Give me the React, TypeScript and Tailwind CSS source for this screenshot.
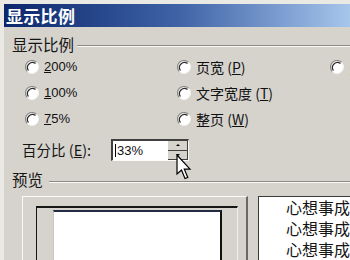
import React from 'react';

const CJK = "font-['Noto_Sans_CJK_SC','Noto_Sans',sans-serif]";
const LAT = "font-['Liberation_Sans','Noto_Sans_CJK_SC',sans-serif]";

function Radio() {
  return (
    <svg width="14" height="14" viewBox="0 0 14 14" className="shrink-0">
      <circle cx="7" cy="7" r="6.5" fill="#ffffff" />
      <path d="M11.6 2.4 A6.5 6.5 0 0 0 2.4 11.6" fill="none" stroke="#8a8884" strokeWidth="1.2" />
      <path d="M10.5 3.5 A5 5 0 0 0 3.5 10.5" fill="none" stroke="#2a2a2a" strokeWidth="1.2" />
      <path d="M2.4 11.6 A6.5 6.5 0 0 0 11.6 2.4" fill="none" stroke="#f4f3f0" strokeWidth="1" />
    </svg>
  );
}

function Opt({ children }: { children: React.ReactNode }) {
  return (
    <div className="h-[26px] flex items-center gap-[5px] text-[#111] whitespace-nowrap">
      <Radio />
      {children}
    </div>
  );
}

function Etched() {
  return <div className="flex-1 h-[2px] border-t border-[#8c8a85] border-b border-b-[#fbfaf7]" />;
}

export default function App() {
  return (
    <div className="relative w-[350px] h-[260px] overflow-hidden bg-[#ebe9e4] pt-[4px] pl-[4px]">
      {/* title bar */}
      <div className="h-[23px] flex items-center pl-[2px] bg-gradient-to-r from-[#0c266c] via-[#3f62a6] to-[#a7c6ec]">
        <span className={`${CJK} text-white font-bold text-[17px] leading-none tracking-[0.3px]`}>显示比例</span>
      </div>

      <div className="h-[240px] bg-[#d6d3cd] pl-[8px]">
        {/* group: 显示比例 */}
        <div className="pt-[8px] h-[24px] flex items-center">
          <span className={`${CJK} text-[15.5px] leading-none text-[#151515] mt-[4px]`}>显示比例</span>
          <div className="flex-1 ml-[3px] mt-[6px]"><Etched /></div>
        </div>

        <div className="mt-[3px] flex text-[13px]">
          <div className={`${LAT} shrink-0 pl-[13px] w-[165px]`}>
            <Opt><span><u>2</u>00%</span></Opt>
            <Opt><span><u>1</u>00%</span></Opt>
            <Opt><span><u>7</u>5%</span></Opt>
          </div>
          <div className={`${CJK} shrink-0 w-[153px] text-[14px]`}>
            <Opt><span>页宽 (<u>P</u>)</span></Opt>
            <Opt><span>文字宽度 (<u>T</u>)</span></Opt>
            <Opt><span>整页 (<u>W</u>)</span></Opt>
          </div>
          <div className={`${CJK} shrink-0 text-[14px]`}>
            <Opt><span>多页</span></Opt>
          </div>
        </div>

        {/* 百分比 */}
        <div className="mt-[7px] flex items-center h-[22px]">
          <span className={`${CJK} pl-[10px] w-[99px] text-[14.5px] text-[#151515] leading-none`}>百分比 (<u>E</u>):</span>
          <div className="w-[78px] h-[22px] flex bg-white border-t-2 border-l-2 border-t-[#404040] border-l-[#404040] border-r border-b border-r-[#fbfaf7] border-b-[#fbfaf7]">
            <div className={`${LAT} flex-1 flex items-center pl-[2px] text-[13px] text-[#111]`}>
              <span className="w-px h-[13px] bg-black mr-[1px]" />
              <span>33%</span>
            </div>
            <div className="w-[20px] flex flex-col">
              <div className="flex-1 bg-[#d6d3cd] border-r border-b border-[#404040] flex items-center justify-center">
                <span className="w-0 h-0 border-l-[2px] border-r-[2px] border-b-[2px] border-l-transparent border-r-transparent border-b-black" />
              </div>
              <div className="flex-1 bg-[#d6d3cd] border-r border-b border-[#404040] flex items-center justify-center">
                <span className="w-0 h-0 border-l-[2px] border-r-[2px] border-t-[2px] border-l-transparent border-r-transparent border-t-black" />
              </div>
            </div>
          </div>
        </div>

        {/* group: 预览 */}
        <div className="mt-[11px] h-[16px] flex items-center">
          <span className={`${CJK} text-[15.5px] leading-none text-[#151515]`}>预览</span>
          <div className="flex-1 ml-[6px] mt-[3px]"><Etched /></div>
        </div>

        <div className="mt-[8px] flex h-[70px]">
          <div className="ml-[10px] w-[232px] border-t border-l border-[#fbfaf7] border-r-2 border-r-[#6b6965] pt-[9px] pl-[13px]">
            <div className="w-[202px] h-full border-t-2 border-l border-[#161616] border-r border-r-[#f0efeb] pt-[2px] pl-[16px]">
              <div className="w-[169px] h-full bg-white border-t-2 border-t-[#222a44] border-l border-l-[#c9c7c2] border-r-2 border-r-[#111]" />
            </div>
          </div>
          <div className="ml-[10px] flex-1 bg-white border-t border-l border-[#3a3a3a] pl-[27px]">
            <div className={`${CJK} text-[16px] leading-[21px] text-[#151515] whitespace-nowrap`}>
              <div>心想事成</div>
              <div>心想事成</div>
              <div>心想事成</div>
            </div>
          </div>
        </div>
      </div>

      {/* mouse pointer */}
      <svg className="absolute left-[176px] top-[154px]" width="17" height="28" viewBox="0 0 17 28">
        <path d="M1 1 L1 20 L5.5 16 L9 24.5 L11.8 23.4 L8.3 15.2 L14 15.2 Z" fill="#fff" stroke="#000" strokeWidth="1.2" strokeLinejoin="miter" />
      </svg>
    </div>
  );
}
